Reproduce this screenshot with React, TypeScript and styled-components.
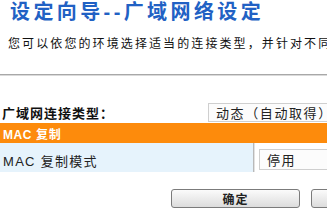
import React from "react";
import styled, { createGlobalStyle } from "styled-components";

const GlobalStyle = createGlobalStyle`
  html, body {
    margin: 0;
    padding: 0;
    background: #ffffff;
    overflow: hidden;
  }
  body {
    font-family: "Liberation Sans", "Noto Sans CJK SC", sans-serif;
  }
`;

const Page = styled.div`
  width: 440px;
  display: flex;
  flex-direction: column;
`;

const Title = styled.h1`
  margin: 0;
  padding-left: 10px;
  font-size: 20px;
  line-height: 24px;
  font-weight: bold;
  letter-spacing: 3.4px;
  color: #2161c4;
  white-space: nowrap;
`;

const Intro = styled.p`
  margin: 13px 0 0;
  padding-left: 8px;
  font-size: 12px;
  line-height: 14px;
  letter-spacing: 2.1px;
  color: #111;
  white-space: nowrap;
`;

const Divider = styled.div`
  margin-top: 23px;
  height: 1px;
  background: #a8a8a8;
  border-bottom: 1px solid #dadada;
`;

const WanRow = styled.div`
  margin-top: 26px;
  height: 20px;
  display: flex;
  align-items: center;
`;

const WanLabel = styled.span`
  width: 208px;
  padding-left: 2px;
  box-sizing: border-box;
  font-size: 13px;
  font-weight: bold;
  letter-spacing: 1px;
  color: #111;
  white-space: nowrap;
`;

const SelectBox = styled.div<{ width: number; height: number }>`
  width: ${props => props.width}px;
  height: ${props => props.height}px;
  box-sizing: border-box;
  border: 1px solid #cfcfcf;
  background: #fcfcfc;
  padding-left: 7px;
  display: flex;
  align-items: center;
  font-size: 13px;
  letter-spacing: 1.6px;
  color: #222;
  white-space: nowrap;
`;

const SectionHeader = styled.div`
  margin-top: 1px;
  height: 20px;
  background: #fd8b0c;
  display: flex;
  align-items: center;
  padding-left: 3px;
  font-size: 12px;
  font-weight: bold;
  color: #ffffff;
  letter-spacing: 0.6px;
`;

const TableRow = styled.div`
  display: grid;
  grid-template-columns: 254px 1fr;
  height: 29px;
`;

const LabelCell = styled.div`
  background: #e6f3fc;
  border-right: 1px solid #b9b9b9;
  display: flex;
  align-items: flex-start;
  padding: 8px 0 0 3px;
  font-size: 13px;
  letter-spacing: 1.3px;
  color: #222;
  white-space: nowrap;
`;

const ValueCell = styled.div`
  border-left: 1px solid #e2e2e2;
  padding: 6px 0 0 4px;
  background: #ffffff;
`;

const ButtonBar = styled.div`
  margin-top: 17px;
  padding-left: 171px;
  display: flex;
  gap: 11px;
`;

const Button = styled.button`
  width: 142px;
  height: 19px;
  padding: 0;
  border: 1px solid #7b7b7b;
  border-radius: 3px;
  background: linear-gradient(#fbfbfb, #dcdcdc);
  font-family: "Liberation Sans", "Noto Sans CJK SC", sans-serif;
  font-size: 12px;
  font-weight: bold;
  letter-spacing: 1px;
  color: #222;
`;

const App: React.FC = () => {
  return (
    <>
      <GlobalStyle />
      <Page>
        <Title>设定向导--广域网络设定</Title>
        <Intro>您可以依您的环境选择适当的连接类型，并针对不同的类型进行设定。</Intro>
        <Divider />
        <WanRow>
          <WanLabel>广域网连接类型：</WanLabel>
          <SelectBox width={150} height={19}>动态（自动取得）</SelectBox>
        </WanRow>
        <SectionHeader>MAC 复制</SectionHeader>
        <TableRow>
          <LabelCell>MAC 复制模式</LabelCell>
          <ValueCell>
            <SelectBox width={120} height={21}>停用</SelectBox>
          </ValueCell>
        </TableRow>
        <ButtonBar>
          <Button>确定</Button>
          <Button>取消</Button>
        </ButtonBar>
      </Page>
    </>
  );
};

export default App;
